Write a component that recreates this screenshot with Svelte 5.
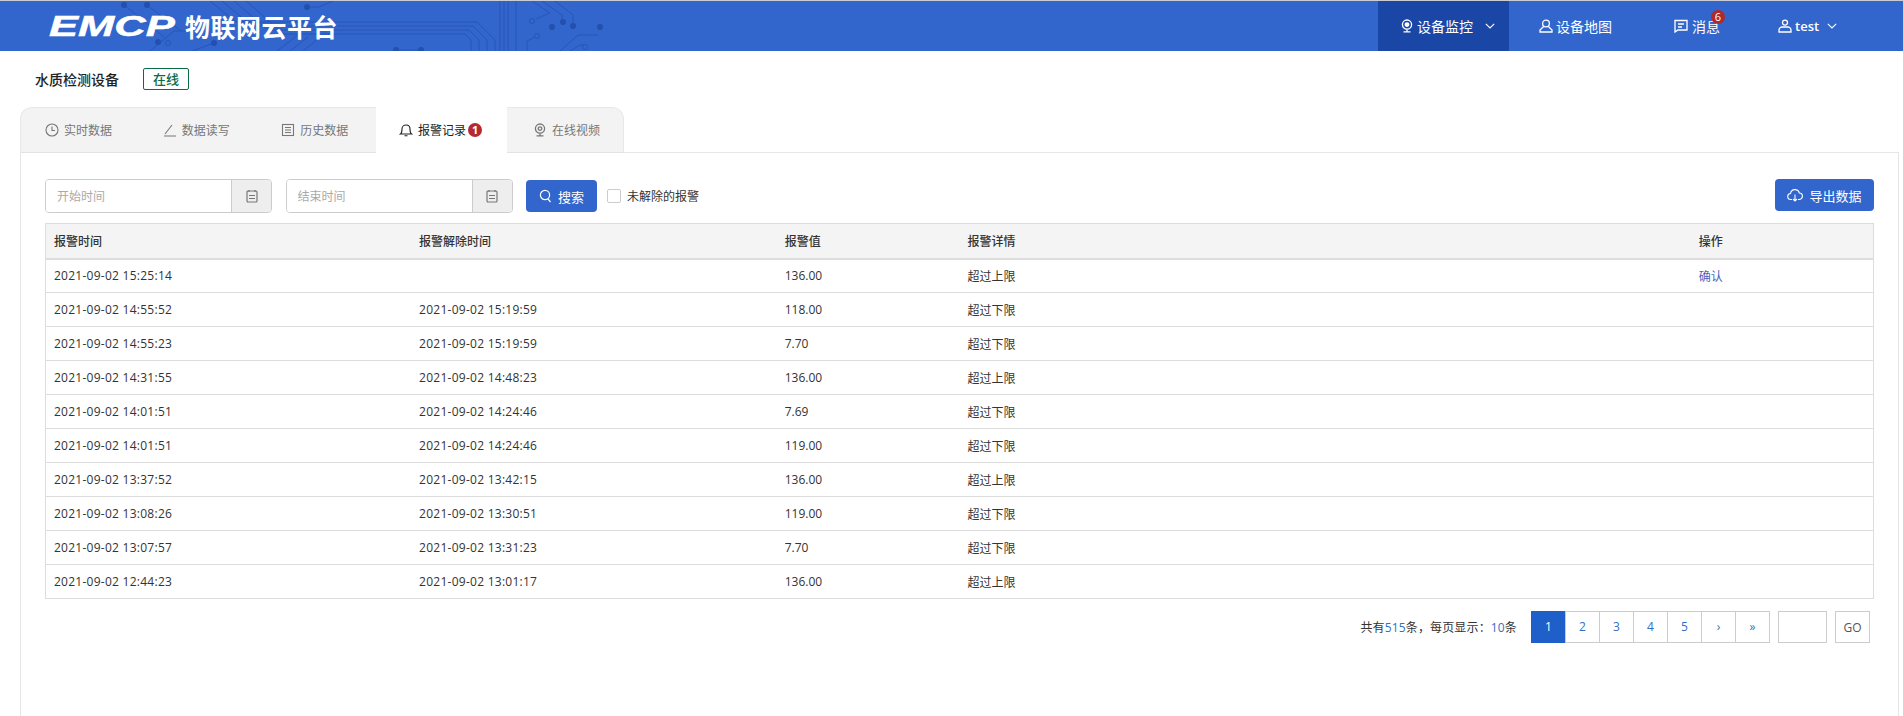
<script>
  const rows = [
    ['2021-09-02 15:25:14', '', '136.00', '超过上限', true],
    ['2021-09-02 14:55:52', '2021-09-02 15:19:59', '118.00', '超过下限', false],
    ['2021-09-02 14:55:23', '2021-09-02 15:19:59', '7.70', '超过下限', false],
    ['2021-09-02 14:31:55', '2021-09-02 14:48:23', '136.00', '超过上限', false],
    ['2021-09-02 14:01:51', '2021-09-02 14:24:46', '7.69', '超过下限', false],
    ['2021-09-02 14:01:51', '2021-09-02 14:24:46', '119.00', '超过下限', false],
    ['2021-09-02 13:37:52', '2021-09-02 13:42:15', '136.00', '超过上限', false],
    ['2021-09-02 13:08:26', '2021-09-02 13:30:51', '119.00', '超过下限', false],
    ['2021-09-02 13:07:57', '2021-09-02 13:31:23', '7.70', '超过下限', false],
    ['2021-09-02 12:44:23', '2021-09-02 13:01:17', '136.00', '超过上限', false]
  ];
  const pages = ['1', '2', '3', '4', '5', '›', '»'];
</script>

<header class="topbar">
  <svg class="circuit" width="640" height="50" viewBox="0 0 640 50" fill="none" stroke="#2855b6" stroke-width="1">
    <path d="M124 4l40 32M147 4l34 26M150 50l24-20h30M214 42l-22 8" />
    <path d="M210 0l26 21h241l18 18v11M222 0l30 25h221l14 14v11M234 0l34 29h201l10 10v11M246 0l38 33h181l6 6v11" />
    <path d="M277 50l22-17M290 50l18-14M303 50l16-13" />
    <path d="M307 6h12l14-6M396 49h25" />
    <path d="M500 0v50M504 0v50M508 0v50M516 0v50" />
    <path d="M532 0l18 12-14 6M542 0l20 14v7M555 0l18 14v11M527 50V40l8-4M560 50l18-16h20M570 50l10-6h4" />
    <g fill="#2350ae" stroke="none">
      <circle cx="124" cy="4" r="3" /><circle cx="147" cy="4" r="3" /><circle cx="307" cy="6" r="3" />
      <circle cx="158" cy="41" r="3" /><circle cx="214" cy="42" r="3" /><circle cx="396" cy="49" r="3" />
      <circle cx="421" cy="49" r="3" /><circle cx="552" cy="26" r="3" /><circle cx="563" cy="21" r="3" />
      <circle cx="573" cy="25" r="3" /><circle cx="600" cy="26" r="3" />
    </g>
    <circle cx="168" cy="42" r="2.500" /><circle cx="532" cy="20" r="2.500" /><circle cx="537" cy="35" r="2.500" />
    <circle cx="585" cy="46" r="2.500" />
  </svg>
  <div class="brand">
    <span class="emcp">EMCP</span>
    <span class="brand-name">物联网云平台</span>
  </div>
  <nav class="nav">
    <a class="nav-item active monitor">
      <svg width="14" height="14" viewBox="0 0 14 14" fill="none" stroke="currentColor" stroke-width="1.300"><circle cx="7" cy="5.600" r="4.600" /><circle cx="7" cy="5.600" r="1.800" fill="currentColor" /><path d="M3.500 12.800h7M7 10.500v2" /></svg>
      设备监控
      <svg class="chev" width="10" height="6" viewBox="0 0 10 6" fill="none" stroke="currentColor" stroke-width="1.100"><path d="M.8.8L5 5l4.200-4.200" /></svg>
    </a>
    <a class="nav-item map">
      <svg width="14" height="14" viewBox="0 0 14 14" fill="none" stroke="currentColor" stroke-width="1.300"><circle cx="7" cy="4.500" r="3.400" /><path d="M4.600 7.500L1 11v2h12v-2L9.400 7.500" /></svg>
      设备地图
    </a>
    <a class="nav-item msg">
      <svg width="14" height="14" viewBox="0 0 14 14" fill="none" stroke="currentColor" stroke-width="1.300"><path d="M1 1.500h12v9.500H4L1 13z" /><path d="M4 5h6M4 8h4" /></svg>
      <span class="msg-label">消息<b class="count">6</b></span>
    </a>
    <a class="nav-item user">
      <svg width="14" height="14" viewBox="0 0 14 14" fill="none" stroke="currentColor" stroke-width="1.300"><circle cx="7" cy="3.600" r="2.500" /><path d="M1 13v-2c0-2 2-3 3-3h6c1 0 3 1 3 3v2z" /></svg>
      <span class="uname">test</span>
      <svg class="chev" width="10" height="6" viewBox="0 0 10 6" fill="none" stroke="currentColor" stroke-width="1.100"><path d="M.8.8L5 5l4.200-4.200" /></svg>
    </a>
  </nav>
</header>

<main class="page">
  <div class="device">
    <h1>水质检测设备</h1>
    <span class="status">在线</span>
  </div>

  <div class="tabs">
    <a class="tab">
      <svg width="14" height="14" viewBox="0 0 14 14" fill="none" stroke="currentColor" stroke-width="1.100"><circle cx="7" cy="7" r="6" /><path d="M7 3.500V7.500H10" /></svg>
      实时数据
    </a>
    <a class="tab">
      <svg width="14" height="14" viewBox="0 0 14 14" fill="none" stroke="currentColor" stroke-width="1.100"><path d="M1 13h12M2 11l7-9" /></svg>
      数据读写
    </a>
    <a class="tab">
      <svg width="14" height="14" viewBox="0 0 14 14" fill="none" stroke="currentColor" stroke-width="1.100"><rect x="1.500" y="1.500" width="11" height="11" /><path d="M4 4.500h6M4 7h6M4 9.500h6" /></svg>
      历史数据
    </a>
    <a class="tab current">
      <svg width="14" height="14" viewBox="0 0 14 14" fill="none" stroke="currentColor" stroke-width="1.100"><path d="M1.500 11c1.500-1 1.500-2 1.500-5 0-2.400 1.800-4 4-4s4 1.600 4 4c0 3 0 4 1.500 5zM5.500 12.800h3" /></svg>
      报警记录<b class="alarm">1</b>
    </a>
    <a class="tab">
      <svg width="14" height="14" viewBox="0 0 14 14" fill="none" stroke="currentColor" stroke-width="1.300"><circle cx="7" cy="5.600" r="4.600" /><circle cx="7" cy="5.600" r="1.800" /><path d="M3.500 12.800h7M7 10.500v2" /></svg>
      在线视频
    </a>
  </div>

  <section class="panel">
    <div class="toolbar">
      <div class="date">
        <input placeholder="开始时间" />
        <span class="addon">
          <svg width="12" height="14" viewBox="0 0 12 14" fill="none" stroke="#777" stroke-width="1.200"><rect x="1" y="2" width="10" height="11" rx="1" /><path d="M3 1v2M9 1v2M3 6.500h6M3 9.500h6" /></svg>
        </span>
      </div>
      <div class="date">
        <input placeholder="结束时间" />
        <span class="addon">
          <svg width="12" height="14" viewBox="0 0 12 14" fill="none" stroke="#777" stroke-width="1.200"><rect x="1" y="2" width="10" height="11" rx="1" /><path d="M3 1v2M9 1v2M3 6.500h6M3 9.500h6" /></svg>
        </span>
      </div>
      <button class="btn search">
        <svg width="13" height="14" viewBox="0 0 13 14" fill="none" stroke="currentColor" stroke-width="1.200"><circle cx="6" cy="6" r="4.600" /><path d="M9 10l2.500 3" /></svg>
        搜索
      </button>
      <label class="check"><input type="checkbox" /><span>未解除的报警</span></label>
      <button class="btn export">
        <svg width="16" height="14" viewBox="0 0 16 14" fill="none" stroke="currentColor" stroke-width="1.100"><path d="M5 11.500H4a3 3 0 0 1-.5-6 4.500 4.500 0 0 1 8.800-.5 3.200 3.200 0 0 1-.3 6.500h-1" /><path d="M8 6.500v6.500M6 11l2 2 2-2" /></svg>
        导出数据
      </button>
    </div>

    <table>
      <colgroup>
        <col style="width:20%" /><col style="width:20%" /><col style="width:10%" /><col style="width:40%" /><col style="width:10%" />
      </colgroup>
      <thead>
        <tr><th>报警时间</th><th>报警解除时间</th><th>报警值</th><th>报警详情</th><th>操作</th></tr>
      </thead>
      <tbody>
        {#each rows as row}
          <tr>
            <td class="when">{row[0]}</td>
            <td class="when">{row[1]}</td>
            <td>{row[2]}</td>
            <td>{row[3]}</td>
            <td>{#if row[4]}<a class="confirm">确认</a>{/if}</td>
          </tr>
        {/each}
      </tbody>
    </table>

    <div class="pager">
      <span class="summary">共有<em>515</em>条，每页显示：<em>10</em>条</span>
      <ul>
        {#each pages as p, i}
          <li class:on={i === 0}>{p}</li>
        {/each}
      </ul>
      <input class="jump" />
      <button class="go">GO</button>
    </div>
  </section>
</main>

<style>
  :global(body) {
    margin: 0;
    background: #fff;
    font-family: "Open Sans", "Noto Sans CJK SC", sans-serif;
    font-size: 12px;
    color: #333;
    overflow: hidden;
  }
  .topbar {
    position: relative;
    height: 50px;
    border-top: 1px solid #c9ccd2;
    background: #3366cc;
    display: flex;
    justify-content: space-between;
    overflow: hidden;
  }
  .circuit {
    position: absolute;
    left: 0;
    top: 0;
  }
  .brand {
    position: relative;
    display: flex;
    align-items: center;
    padding-left: 49px;
    color: #fff;
  }
  .emcp {
    font-family: "Liberation Sans", sans-serif;
    font-weight: 700;
    font-style: italic;
    font-size: 29px;
    line-height: 1;
    display: inline-block;
    width: 131px;
    transform: scaleX(1.500);
    transform-origin: left center;
    -webkit-text-stroke: 0.5px #fff;
  }
  .brand-name {
    font-family: "Noto Sans CJK SC", sans-serif;
    font-weight: 700;
    font-size: 25px;
    letter-spacing: 0.5px;
    margin-left: 5px;
  }
  .nav {
    position: relative;
    display: flex;
  }
  .nav-item {
    display: flex;
    align-items: center;
    gap: 3px;
    color: #fff;
    height: 50px;
    box-sizing: border-box;
    padding-left: 22px;
    font-size: 14px;
  }
  .nav-item svg {
    flex: none;
  }
  .nav-item .chev {
    margin-left: 9px;
  }
  .active {
    background: #1a47a6;
  }
  .monitor { width: 131px; }
  .map { width: 131px; padding-left: 30px; }
  .msg { width: 118px; padding-left: 34px; }
  .user { width: 145px; padding-left: 20px; }
  .uname {
    font-size: 13px;
    font-weight: 600;
  }
  .user .chev {
    margin-left: 5px;
  }
  .msg-label {
    position: relative;
    margin-left: 1px;
  }
  .count {
    position: absolute;
    left: 19px;
    top: -6px;
    width: 14px;
    height: 14px;
    border-radius: 50%;
    background: #b02a2a;
    color: #fff;
    font-size: 11px;
    font-weight: 400;
    line-height: 14px;
    text-align: center;
  }
  .page {
    padding-left: 20px;
    padding-right: 4px;
  }
  .device {
    display: flex;
    align-items: center;
    height: 56px;
    padding-left: 15px;
  }
  h1 {
    margin: 0;
    font-size: 14px;
    font-weight: 500;
    color: #222;
    width: 108px;
  }
  .status {
    box-sizing: border-box;
    width: 46px;
    height: 22px;
    line-height: 20px;
    text-align: center;
    border: 1px solid #0b6b45;
    border-radius: 2px;
    color: #0b6b45;
    font-size: 13px;
    font-weight: 500;
  }
  .tabs {
    display: flex;
    width: 604px;
  }
  .tab {
    box-sizing: border-box;
    height: 46px;
    width: 118.700px;
    display: flex;
    align-items: center;
    gap: 5px;
    padding-left: 24px;
    background: #f3f3f3;
    border-top: 1px solid #e8e8e8;
    border-bottom: 1px solid #e3e3e3;
    color: #777;
  }
  .tab:first-child {
    border-left: 1px solid #e8e8e8;
    border-top-left-radius: 12px;
  }
  .tab:last-child {
    width: 117px;
    padding-left: 26px;
    border-right: 1px solid #e8e8e8;
    border-top-right-radius: 12px;
  }
  .tab svg {
    flex: none;
  }
  .tab.current {
    width: 131px;
    padding-left: 23px;
    background: #fff;
    color: #222;
    border-top: 1px solid #fff;
    border-bottom: 1px solid #fff;
    border-radius: 12px 12px 0 0;
  }
  .alarm {
    width: 14px;
    height: 14px;
    margin-left: -3px;
    border-radius: 50%;
    background: #b52a2e;
    color: #fff;
    font-size: 11px;
    line-height: 14px;
    text-align: center;
  }
  .panel {
    box-sizing: border-box;
    height: 564px;
    margin-top: -1px;
    padding: 26px 24px 0 24px;
    border: 1px solid #e6e6e6;
    border-bottom: 0;
  }
  .toolbar {
    display: flex;
    align-items: flex-start;
    height: 44px;
  }
  .date {
    box-sizing: border-box;
    width: 227px;
    height: 34px;
    display: flex;
    border: 1px solid #ccc;
    border-radius: 4px;
    margin-right: 13.500px;
    overflow: hidden;
  }
  .date input {
    flex: 1;
    min-width: 0;
    border: 0;
    outline: 0;
    padding: 0 11px;
    font: inherit;
    color: #333;
  }
  .date input::placeholder {
    color: #aaa;
  }
  .addon {
    width: 39px;
    background: #eee;
    border-left: 1px solid #ccc;
    display: flex;
    align-items: center;
    justify-content: center;
  }
  .btn {
    box-sizing: border-box;
    height: 32px;
    display: flex;
    align-items: center;
    justify-content: center;
    border: 0;
    border-radius: 4px;
    background: #3366cc;
    color: #fff;
    font-family: inherit;
    font-size: 13px;
    padding: 0;
  }
  .search {
    width: 71px;
    gap: 6px;
    margin-top: 1px;
  }
  .export {
    width: 99px;
    gap: 6px;
    margin-left: auto;
  }
  .check {
    display: flex;
    align-items: center;
    gap: 6px;
    height: 34px;
    margin-left: 10px;
  }
  .check input {
    appearance: none;
    box-sizing: border-box;
    width: 14px;
    height: 14px;
    margin: 0;
    border: 1px solid #ccc;
    border-radius: 2px;
    background: #fff;
  }
  table {
    width: 100%;
    table-layout: fixed;
    border-collapse: collapse;
    border: 1px solid #ddd;
  }
  th, td {
    box-sizing: border-box;
    height: 34px;
    padding: 0 8px;
    text-align: left;
    font-weight: 400;
    white-space: nowrap;
  }
  th {
    height: 35px;
    background: #f4f4f4;
    color: #333;
    font-weight: 500;
    border-bottom: 2px solid #ddd;
  }
  td {
    border-bottom: 1px solid #ddd;
  }
  td.when {
    letter-spacing: 0.260px;
  }
  .confirm {
    color: #4a5fc1;
  }
  .pager {
    display: flex;
    align-items: center;
    justify-content: flex-end;
    margin-top: 12px;
    padding-right: 4px;
  }
  .summary {
    letter-spacing: 0.150px;
  }
  .summary em {
    font-style: normal;
    color: #2f6fc4;
  }
  ul {
    list-style: none;
    display: flex;
    margin: 0 8px 0 15px;
    padding: 0;
  }
  li {
    box-sizing: border-box;
    width: 35px;
    height: 32px;
    line-height: 30px;
    text-align: center;
    border: 1px solid #ccc;
    margin-left: -1px;
    color: #2f6fc4;
  }
  li.on {
    background: #1f5fc9;
    border-color: #1f5fc9;
    color: #fff;
  }
  .jump {
    box-sizing: border-box;
    width: 49px;
    height: 32px;
    border: 1px solid #ccc;
    outline: 0;
    padding: 0;
  }
  .go {
    box-sizing: border-box;
    width: 35px;
    height: 32px;
    margin-left: 8px;
    padding: 0;
    border: 1px solid #ccc;
    background: #fff;
    color: #555;
    font: inherit;
  }
</style>
